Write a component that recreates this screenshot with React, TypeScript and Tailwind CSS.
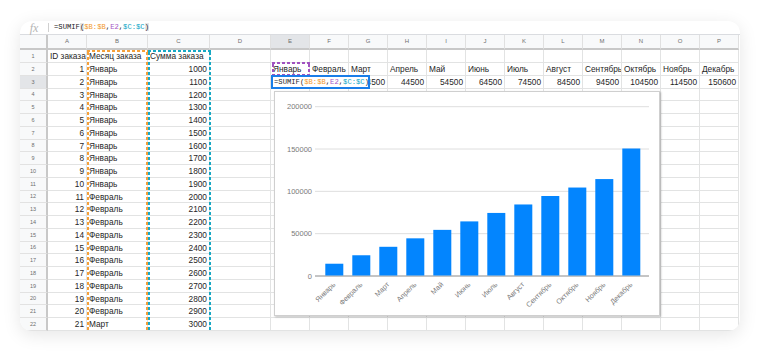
const months = ['Январь', 'Февраль', 'Март', 'Апрель', 'Май', 'Июнь', 'Июль', 'Август', 'Сентябрь', 'Октябрь', 'Ноябрь', 'Декабрь'];
const sums = [14500, 24500, 34500, 44500, 54500, 64500, 74500, 84500, 94500, 104500, 114500, 150600];
const letters = ['A', 'B', 'C', 'D', 'E', 'F', 'G', 'H', 'I', 'J', 'K', 'L', 'M', 'N', 'O', 'P'];

type Val = string | number | null;

function buildRows(): Val[][] {
  const rows: Val[][] = [];
  const head: Val[] = Array(16).fill(null);
  head[0] = 'ID заказа';
  head[1] = 'Месяц заказа';
  head[2] = 'Сумма заказа';
  rows.push(head);
  for (let i = 1; i <= 21; i++) {
    const r: Val[] = Array(16).fill(null);
    r[0] = i;
    r[1] = i <= 10 ? 'Январь' : i <= 20 ? 'Февраль' : 'Март';
    r[2] = 1000 + (i - 1) * 100;
    if (i === 1) months.forEach((m, k) => (r[4 + k] = m));
    if (i === 2) sums.forEach((s, k) => (r[4 + k] = s));
    rows.push(r);
  }
  return rows;
}

function Formula() {
  return (
    <>
      <span>=SUMIF(</span>
      <span className="text-[#f29b2f]">$B:$B</span>
      <span>,</span>
      <span className="text-[#a555c4]">E2</span>
      <span>,</span>
      <span className="text-[#13a6c6]">$C:$C</span>
      <span>)</span>
    </>
  );
}

function Chart() {
  const base = 184;
  const top = 14.7;
  const scale = (base - top) / 200000;
  const ticks = [0, 50000, 100000, 150000, 200000];
  return (
    <svg width="386" height="225" viewBox="0 0 386 225" className="block">
      {ticks.map((t) => {
        const y = base - t * scale;
        return (
          <g key={t}>
            <line x1="40" x2="374" y1={y} y2={y} stroke={t === 0 ? '#8a8a8a' : '#dedede'} strokeWidth="1" />
            <text x="37" y={y + 2.5} textAnchor="end" fontSize="7.5" fill="#7a7a7a" fontFamily="Liberation Sans, Arial, sans-serif">
              {t}
            </text>
          </g>
        );
      })}
      {sums.map((s, i) => {
        const x = 50.3 + i * 27;
        const h = s * scale;
        const cx = x + 10.5;
        return (
          <g key={i}>
            <rect x={x} y={base - h} width="18" height={h - 0.5} fill="#0385fe" />
            <text
              x={cx}
              y={193}
              textAnchor="end"
              fontSize="7.2"
              fill="#7a7a7a"
              fontFamily="Liberation Sans, Arial, sans-serif"
              transform={`rotate(-45 ${cx} 193)`}
            >
              {months[i]}
            </text>
          </g>
        );
      })}
    </svg>
  );
}

// dashed "copied range" frame: top edge, two side edges, optional bottom edge
function Marquee({color, className, closed}: {color: string; className: string; closed?: boolean}) {
  const v = `repeating-linear-gradient(to bottom, ${color} 0 3px, transparent 3px 5px)`;
  const h = `repeating-linear-gradient(to right, ${color} 0 3px, transparent 3px 5px)`;
  return (
    <div className={`flex flex-col ${className}`}>
      <div className="h-[2px] shrink-0" style={{backgroundImage: h}} />
      <div className="flex-1 flex justify-between">
        <div className="w-[2px]" style={{backgroundImage: v}} />
        <div className="w-[2px]" style={{backgroundImage: v}} />
      </div>
      {closed && <div className="h-[2px] shrink-0" style={{backgroundImage: h}} />}
    </div>
  );
}

export default function App() {
  const rows = buildRows();

  return (
    <div className="w-[760px] h-[351px] bg-white pt-[21px] pl-[20px] font-['Liberation_Sans',Arial,sans-serif]">
      <div className="relative w-[720px] h-[310px] rounded-[12px] overflow-hidden bg-white shadow-[0_4px_18px_rgba(0,0,0,0.10)]">
        {/* formula bar */}
        <div className="flex items-center h-[14px] border-b border-[#dadce0]">
          <div className="w-[28px] text-center italic font-['Liberation_Serif',serif] text-[12px] leading-none text-[#b5b5b5]">fx</div>
          <div className="w-px h-[9px] bg-[#d0d0d0]" />
          <div className="ml-[5px] font-['Liberation_Mono',monospace] text-[7.2px] text-[#222] whitespace-nowrap">
            <span>=SUMIF</span>
            <span className="bg-[#e6e6e6]">(</span>
            <span className="text-[#f29b2f]">$B:$B</span>
            <span>,</span>
            <span className="text-[#a555c4]">E2</span>
            <span>,</span>
            <span className="text-[#13a6c6]">$C:$C</span>
            <span className="bg-[#e6e6e6]">)</span>
          </div>
        </div>

        {/* grid */}
        <div className="grid grid-cols-[28px_39px_61px_62px_61px_repeat(12,39px)]">
          <div className="h-[15.25px] bg-[#f8f9fa] border-r-2 border-b-2 border-[#c8c8c8]" />
          {letters.map((l) => (
            <div
              key={l}
              className={`h-[15.25px] flex items-center justify-center text-[6px] text-[#6e6e6e] border-r border-r-[#e0e0e0] border-b-2 border-b-[#c8c8c8] ${l === 'E' ? 'bg-[#e3e5e8]' : 'bg-[#f8f9fa]'}`}
            >
              {l}
            </div>
          ))}
          {rows.map((r, ri) => (
            <div key={ri} className="contents">
              <div
                className={`h-[12.75px] flex items-center justify-center text-[5.5px] text-[#6e6e6e] border-r-2 border-r-[#c8c8c8] border-b border-b-[#e2e2e2] ${ri === 2 ? 'bg-[#e3e5e8]' : 'bg-[#f8f9fa]'}`}
              >
                {ri + 1}
              </div>
              {r.map((v, ci) => (
                <div
                  key={ci}
                  className={`h-[12.75px] overflow-hidden whitespace-nowrap px-[2px] text-[8.3px] leading-[12.75px] text-[#1f1f1f] border-r border-b border-[#e2e3e3] ${typeof v === 'number' ? 'text-right' : 'text-left'}`}
                >
                  {v}
                </div>
              ))}
            </div>
          ))}
        </div>

        {/* copied ranges B:B and C:C */}
        <div className="absolute left-[66.5px] top-[29px] bottom-0 flex">
          <Marquee color="#f5a03a" className="w-[61.5px]" />
          <Marquee color="#17a8c4" className="w-[62.5px]" />
        </div>

        {/* E2 reference and the cell being edited */}
        <div className="absolute left-[251px] top-[40.5px] flex flex-col items-start">
          <Marquee color="#a052c0" closed className="ml-[0.5px] w-[38.5px] h-[14px]" />
          <div className="-mt-[0.5px] w-[98.5px] h-[14px] bg-white border-2 border-[#1a7ee8] flex items-center pl-[1px] font-['Liberation_Mono',monospace] text-[7.2px] text-[#1f1f1f] whitespace-nowrap">
            <Formula />
          </div>
        </div>

        {/* chart */}
        <div className="absolute left-[254px] top-[70px] w-[386px] h-[225px] bg-white border border-[#cfcfcf] shadow-[1px_1px_2px_rgba(0,0,0,0.25)]">
          <Chart />
        </div>
      </div>
    </div>
  );
}
